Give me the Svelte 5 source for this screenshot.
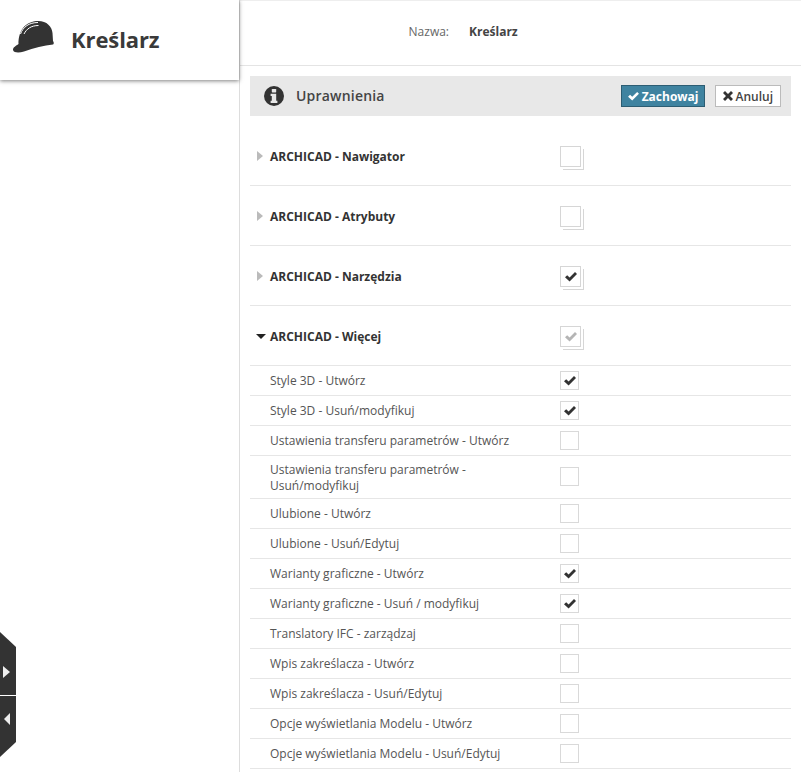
<script>
	const groups = [
		{ name: 'ARCHICAD - Nawigator', state: 'none' },
		{ name: 'ARCHICAD - Atrybuty', state: 'none' },
		{ name: 'ARCHICAD - Narzędzia', state: 'all' },
		{ name: 'ARCHICAD - Więcej', state: 'partial', open: true }
	];

	const items = [
		{ name: 'Style 3D - Utwórz', on: true },
		{ name: 'Style 3D - Usuń/modyfikuj', on: true },
		{ name: 'Ustawienia transferu parametrów - Utwórz', on: false },
		{ name: 'Ustawienia transferu parametrów - Usuń/modyfikuj', on: false, wrap: true },
		{ name: 'Ulubione - Utwórz', on: false },
		{ name: 'Ulubione - Usuń/Edytuj', on: false },
		{ name: 'Warianty graficzne - Utwórz', on: true },
		{ name: 'Warianty graficzne - Usuń / modyfikuj', on: true },
		{ name: 'Translatory IFC - zarządzaj', on: false },
		{ name: 'Wpis zakreślacza - Utwórz', on: false },
		{ name: 'Wpis zakreślacza - Usuń/Edytuj', on: false },
		{ name: 'Opcje wyświetlania Modelu - Utwórz', on: false },
		{ name: 'Opcje wyświetlania Modelu - Usuń/Edytuj', on: false }
	];

	const check = 'M1 6.2 L3.2 4.2 L5.6 6.4 L11 1 L13 3 L5.6 10.4 Z';
</script>

<div class="page">
	<aside class="sidebar">
		<header class="role">
			<svg class="helmet" width="44" height="34" viewBox="0 0 44 34">
				<path
					fill="#333"
					d="M1 30 C1 27 4 26 6.500 24 C6.500 14 10 3 24 1 C34 0 40 6 40.500 13 L41 21 C42 22 42 24 41 24.500 C32 25.500 22 28 12 31.500 C7 33 2 33 1 30 Z"
				/>
				<path fill="none" stroke="#fff" stroke-width="1" d="M8.500 14 C11 7 17 2.500 26 2.500" />
				<path fill="none" stroke="#fff" stroke-width="1" d="M12 14 C14.500 9 19 5.500 26.500 5.500" />
			</svg>
			<h1>Kreślarz</h1>
		</header>
		<div class="tabs">
			<button class="tab next" aria-label="Dalej">
				<span class="arrow right"></span>
			</button>
			<button class="tab prev" aria-label="Wstecz">
				<span class="arrow left"></span>
			</button>
		</div>
	</aside>

	<main class="content">
		<div class="name-row">
			<span class="label">Nazwa:</span>
			<strong>Kreślarz</strong>
		</div>

		<section class="permissions">
			<div class="bar">
				<svg class="info" width="20" height="20" viewBox="0 0 20 20">
					<circle cx="10" cy="10" r="10" fill="#333" />
					<rect x="7.800" y="3" width="4.400" height="3.400" rx="0.600" fill="#e8e8e8" />
					<path fill="#e8e8e8" d="M6.600 7.800 H12.200 V14.800 H13.400 V17 H6.600 V14.800 H7.800 V10 H6.600 Z" />
				</svg>
				<h2>Uprawnienia</h2>
				<button class="btn primary">
					<svg width="13" height="10" viewBox="0 0 14 11"><path fill="#fff" d={check} /></svg>
					Zachowaj
				</button>
				<button class="btn">
					<svg width="10" height="10" viewBox="0 0 10 10">
						<path fill="#333" d="M0 2 L2 0 L5 3 L8 0 L10 2 L7 5 L10 8 L8 10 L5 7 L2 10 L0 8 L3 5 Z" />
					</svg>
					Anuluj
				</button>
			</div>

			<div class="list">
				{#each groups as group}
					<div class="group">
						<span class="caret" class:open={group.open}></span>
						<span class="group-name">{group.name}</span>
						<span class="stack">
							{#if group.state !== 'none'}
								<svg width="14" height="11" viewBox="0 0 14 11">
									<path fill={group.state === 'all' ? '#333' : '#b5b5b5'} d={check} />
								</svg>
							{/if}
						</span>
					</div>
				{/each}
				{#each items as item}
					<div class="item" class:wrap={item.wrap}>
						<span class="item-name">{item.name}</span>
						<span class="box">
							{#if item.on}
								<svg width="14" height="11" viewBox="0 0 14 11"><path fill="#333" d={check} /></svg>
							{/if}
						</span>
					</div>
				{/each}
			</div>
		</section>
	</main>
</div>

<style>
	:global(body) {
		margin: 0;
		background: #fff;
		overflow: hidden;
	}

	.page {
		display: flex;
		height: 772px;
		overflow: hidden;
		font-family: 'Open Sans', sans-serif;
		font-size: 12px;
		color: #555;
	}

	.sidebar {
		position: relative;
		flex: 0 0 239px;
		border-right: 1px solid #ddd;
	}

	.role {
		display: flex;
		align-items: center;
		box-sizing: border-box;
		height: 80px;
		padding: 0 0 0 12px;
		background: #fff;
		box-shadow: 0 1px 4px rgba(0, 0, 0, 0.5);
	}

	.helmet {
		margin-top: -6px;
	}

	h1 {
		margin: -2px 0 0 15px;
		font-size: 22px;
		font-weight: 700;
		letter-spacing: -0.1px;
		color: #3a3a3a;
	}

	.tabs {
		position: absolute;
		left: 0;
		top: 632px;
		display: flex;
		flex-direction: column;
		gap: 1px;
	}

	.tab {
		position: relative;
		display: block;
		width: 16px;
		height: 63px;
		padding: 0;
		border: 0;
		background: #333;
	}

	.tab.next {
		clip-path: polygon(0 0, 100% 15px, 100% 100%, 0 100%);
	}

	.tab.prev {
		height: 61px;
		clip-path: polygon(0 0, 100% 0, 100% 46px, 0 100%);
	}

	.arrow {
		position: absolute;
		left: 4px;
		width: 0;
		height: 0;
		border-top: 6px solid transparent;
		border-bottom: 6px solid transparent;
	}

	.arrow.right {
		top: 34px;
		left: 3px;
		border-left: 7px solid #eee;
	}

	.arrow.left {
		top: 17px;
		border-right: 6px solid #eee;
	}

	.content {
		flex: 1;
		min-width: 0;
		padding: 0 10px 0 10px;
	}

	.name-row {
		display: flex;
		align-items: flex-start;
		box-sizing: border-box;
		height: 66px;
		padding-top: 22px;
		margin: 0 -10px;
		border-top: 1px solid #eee;
		border-bottom: 1px solid #e4e4e4;
	}

	.label {
		box-sizing: border-box;
		width: 210px;
		padding-right: 1px;
		text-align: right;
		color: #666;
	}

	.name-row strong {
		margin-left: 19px;
		font-weight: 700;
		color: #444;
	}

	.permissions {
		margin-top: 10px;
	}

	.bar {
		display: flex;
		align-items: center;
		gap: 10px;
		height: 40px;
		padding: 0 10px 0 14px;
		background: #e8e8e8;
	}

	.bar h2 {
		flex: 1;
		margin: -2px 0 0 2px;
		font-size: 14px;
		font-weight: 600;
		letter-spacing: 0.2px;
		color: #444;
	}

	.btn {
		display: flex;
		align-items: center;
		justify-content: center;
		gap: 3px;
		box-sizing: border-box;
		height: 22px;
		padding: 0 7px;
		border: 1px solid #bbb;
		background: #fff;
		font-family: inherit;
		font-size: 12px;
		font-weight: 600;
		color: #444;
	}

	.btn.primary {
		gap: 2px;
		border-color: #2c5d73;
		background: #3f83a0;
		color: #fff;
		font-weight: 700;
		padding: 0 5px;
	}

	.list {
		margin-top: 10px;
	}

	.group {
		display: flex;
		align-items: center;
		box-sizing: border-box;
		height: 60px;
		padding-top: 2px;
		border-bottom: 1px solid #e6e6e6;
	}

	.caret {
		flex: 0 0 auto;
		width: 0;
		height: 0;
		margin: -2px 7px 0 7px;
		border-top: 5px solid transparent;
		border-bottom: 5px solid transparent;
		border-left: 6px solid #bbb;
	}

	.caret.open {
		margin: 0 4px 0 6px;
		border-top: 5px solid #222;
		border-bottom: 0;
		border-left: 5px solid transparent;
		border-right: 5px solid transparent;
	}

	.group-name {
		flex: 0 0 290px;
		font-weight: 700;
		color: #333;
	}

	.stack {
		display: flex;
		align-items: center;
		justify-content: center;
		box-sizing: border-box;
		width: 21px;
		height: 21px;
		border: 1px solid #d6d6d6;
		background: #fff;
		box-shadow:
			2px 2px 0 #fff,
			3px 3px 0 #d6d6d6;
	}

	.item {
		display: flex;
		align-items: center;
		box-sizing: border-box;
		min-height: 30px;
		padding: 5px 0 5px 20px;
		border-bottom: 1px solid #e6e6e6;
	}

	.item.wrap {
		padding: 6px 0 4px 20px;
	}

	.item-name {
		flex: 0 0 240px;
		margin-right: 50px;
		line-height: 16px;
		color: #555;
	}

	.box {
		display: flex;
		align-items: center;
		justify-content: center;
		box-sizing: border-box;
		width: 19px;
		height: 19px;
		margin: -2px 0;
		border: 1px solid #d9d9d9;
		background: #fff;
	}

	.wrap .box {
		margin-top: -6px;
	}
</style>
